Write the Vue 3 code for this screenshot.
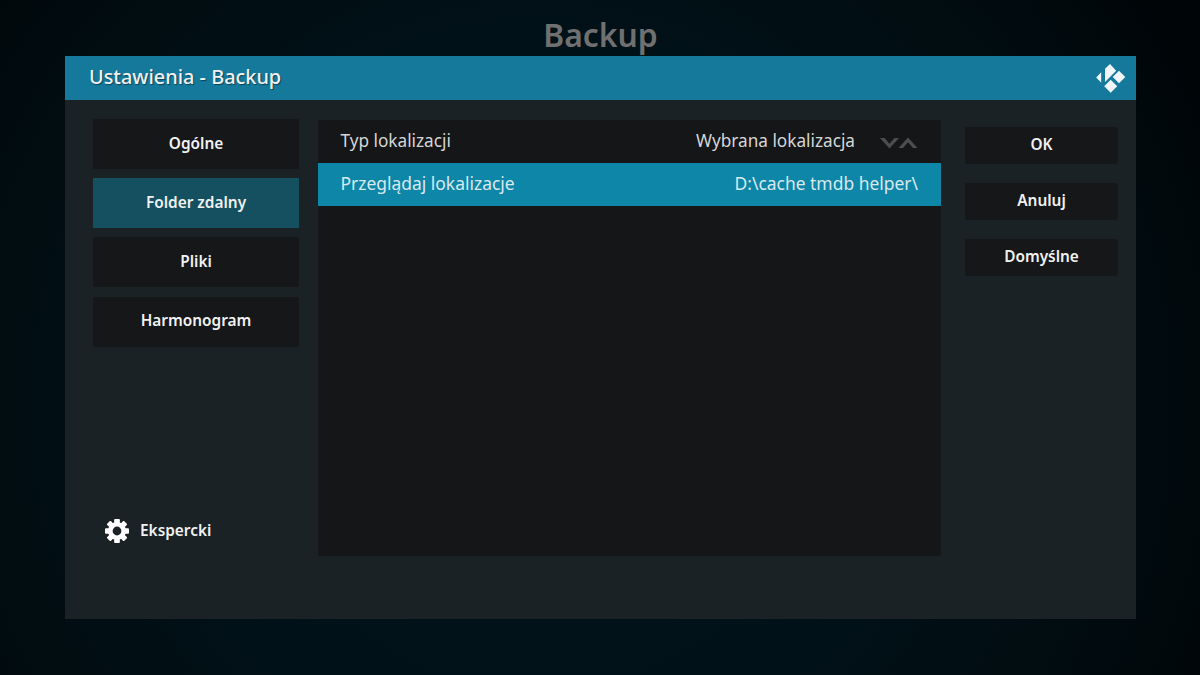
<script setup>
const tabs = [
  { label: 'Ogólne' },
  { label: 'Folder zdalny', active: true },
  { label: 'Pliki' },
  { label: 'Harmonogram' },
]
const actions = ['OK', 'Anuluj', 'Domyślne']
const teeth = [0, 45, 90, 135, 180, 225, 270, 315]
</script>

<template>
  <div class="page">
    <div class="heading">Backup</div>
    <section class="dialog">
      <header class="bar">
        <span class="bar-title">Ustawienia - Backup</span>
        <svg class="logo" width="30" height="30" viewBox="0 0 30 30">
          <path d="M0.2 14.4 5.2 9.2V19.7Z" fill="#f1f6f8" />
          <path d="M9 5.7 14 0.9 20.2 7.7 9 19Z" fill="#f1f6f8" />
          <path d="M23 7.7 29.3 14 23 20.3 16.7 14Z" fill="#f1f6f8" />
          <path d="M14.7 16.8 21.2 23.3 14.7 29.8 8.2 23.3Z" fill="#f1f6f8" />
        </svg>
      </header>
      <div class="body">
        <nav class="tabs">
          <div v-for="t in tabs" :key="t.label" class="tab" :class="{ active: t.active }">{{ t.label }}</div>
          <div class="expert">
            <svg class="gear" width="26" height="26" viewBox="0 0 26 26">
              <rect
                v-for="a in teeth"
                :key="a"
                x="10.4"
                y="1"
                width="5.2"
                height="24"
                rx="1"
                fill="#fff"
                :transform="`rotate(${a} 13 13)`"
              />
              <circle cx="13" cy="13" r="9" fill="#fff" />
              <circle cx="13" cy="13" r="4.4" fill="#1b2225" />
            </svg>
            <span class="expert-label">Ekspercki</span>
          </div>
        </nav>
        <div class="list">
          <div class="row">
            <span>Typ lokalizacji</span>
            <span class="row-right">
              <span>Wybrana lokalizacja</span>
              <svg class="arrows" width="38" height="12" viewBox="0 0 38 12">
                <path d="M0 1H4.6L9.5 6.8 14.4 1H19L9.5 11.5Z" fill="#4c4d4e" />
                <path d="M18.5 11H23L28 5.2 33 11H37.5L28 0.5Z" fill="#4c4d4e" />
              </svg>
            </span>
          </div>
          <div class="row selected">
            <span>Przeglądaj lokalizacje</span>
            <span>D:\cache tmdb helper\</span>
          </div>
        </div>
        <aside class="actions">
          <div v-for="a in actions" :key="a" class="action">{{ a }}</div>
        </aside>
      </div>
    </section>
  </div>
</template>

<style>
html, body { margin: 0; background: #000; }
</style>

<style scoped>
.page {
  width: 1200px;
  height: 675px;
  overflow: hidden;
  box-sizing: border-box;
  padding: 14px 64px 0 65px;
  font-family: "Noto Sans", "Open Sans", sans-serif;
  background:
    radial-gradient(ellipse 62% 110% at 45% 60%, #01141c 0%, #011118 50%, #010c10 78%, #000507 100%);
}
.heading {
  position: relative;
  z-index: 1;
  height: 42px;
  line-height: 42px;
  text-align: center;
  font-size: 31.8px;
  font-weight: 600;
  color: #707070;
}
.dialog {
  height: 563px;
  background: #1b2225;
  display: flex;
  flex-direction: column;
}
.bar {
  height: 44px;
  flex: none;
  background: #15799b;
  display: flex;
  align-items: center;
  justify-content: space-between;
  padding: 0 10px 0 24px;
}
.bar-title {
  font-size: 19.9px;
  font-weight: 500;
  color: #f1f1f1;
  padding-bottom: 3px;
  text-shadow: 1px 1px 1px rgba(0, 0, 0, 0.45);
}
.logo { display: block; }
.body {
  flex: 1;
  display: flex;
  align-items: flex-start;
  padding-top: 19px;
}
.tabs {
  width: 206px;
  height: 425px;
  margin-left: 28px;
  display: flex;
  flex-direction: column;
  gap: 9.2px;
}
.tab {
  height: 50px;
  flex: none;
  box-sizing: border-box;
  padding-bottom: 2px;
  background: #161718;
  border-radius: 2px;
  display: flex;
  align-items: center;
  justify-content: center;
  font-size: 15.4px;
  font-weight: 600;
  color: #f1f1f1;
}
.tab.active { background: #14505f; border-radius: 0; }
.expert {
  margin-top: auto;
  display: flex;
  align-items: center;
  gap: 10px;
  padding-left: 11px;
  font-size: 15.4px;
  font-weight: 600;
  color: #f1f1f1;
}
.expert-label { padding-bottom: 2px; }
.gear { display: block; }
.list {
  width: 623px;
  height: 436px;
  margin: 1px 0 0 19px;
  background: #141617;
  border-radius: 2px;
  font-size: 17.2px;
  color: #d6d6d6;
}
.row {
  height: 43px;
  display: flex;
  align-items: center;
  justify-content: space-between;
  padding: 0 23px 3px 22.5px;
  box-sizing: border-box;
}
.row-right { display: flex; align-items: center; gap: 25px; }
.arrows { display: block; margin-top: 5px; }
.selected { background: #0d86a8; color: #d9e9ee; font-size: 17.45px; }
.actions {
  width: 153px;
  margin: 8px 0 0 24px;
  display: flex;
  flex-direction: column;
  gap: 19px;
}
.action {
  height: 37px;
  box-sizing: border-box;
  padding-bottom: 3px;
  background: #161718;
  border-radius: 2px;
  display: flex;
  align-items: center;
  justify-content: center;
  font-size: 15.4px;
  font-weight: 600;
  color: #f1f1f1;
}
</style>
